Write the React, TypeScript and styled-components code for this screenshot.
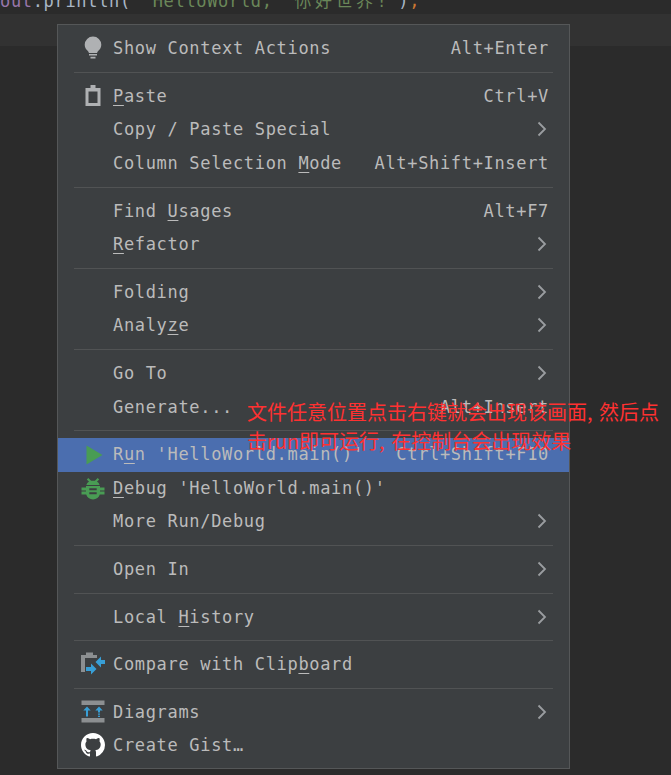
import { ReactNode } from 'react';
import styled, { createGlobalStyle } from 'styled-components';
import { BsGithub } from 'react-icons/bs';

const MONO = '"DejaVu Sans Mono", "Liberation Mono", monospace';

const GlobalStyle = createGlobalStyle`
  html, body {
    margin: 0;
    padding: 0;
    background: #2b2b2b;
  }
`;

const SEditor = styled.div`
  position: relative;
  width: 671px;
  height: 775px;
  overflow: hidden;
  background: #2b2b2b;
`;

const SCodeLine = styled.div`
  height: 14px;
  overflow: hidden;
`;

const SCodeText = styled.div`
  margin-top: -11px;
  font-family: ${MONO};
  font-size: 17px;
  letter-spacing: 0.67px;
  line-height: 22px;
  white-space: pre;
  color: #a9b7c6;
`;

const SCaretLine = styled.div`
  height: 32px;
  background: #323232;
`;

const SToken = styled.span<{ $color: string }>`
  color: ${({ $color }) => $color};
`;

const SCjkToken = styled.span`
  font-family: "Noto Sans CJK SC", sans-serif;
  letter-spacing: 3.5px;
  color: #6a8759;
`;

const SMenu = styled.div`
  position: absolute;
  left: 57px;
  top: 24px;
  box-sizing: border-box;
  width: 513px;
  height: 745px;
  padding-top: 7px;
  background: #3c3f41;
  border: 1px solid #555758;
`;

const SRow = styled.div<{ $active?: boolean }>`
  box-sizing: border-box;
  display: flex;
  align-items: center;
  height: 33.6px;
  padding: 0 20px 1.2px 22px;
  background: ${({ $active }) => ($active ? '#4b6eaf' : 'transparent')};
  font-family: ${MONO};
  font-size: 17px;
  letter-spacing: 0.67px;
  white-space: pre;
  color: #bbbbbb;
`;

const SIconCell = styled.div`
  flex: none;
  display: flex;
  align-items: center;
  justify-content: center;
  width: 25px;
  height: 24px;
  margin-right: 8px;
`;

const SLabel = styled.span`
  flex: 1;
`;

const SMnemonic = styled.span`
  text-decoration: underline;
  text-underline-offset: 3px;
  text-decoration-thickness: 1px;
`;

const SShortcut = styled.span`
  flex: none;
`;

const SChevron = styled.svg`
  flex: none;
  margin-right: 2px;
`;

const SSeparator = styled.div`
  height: 14px;
  display: flex;
  align-items: center;
  padding: 0 16px;

  &::after {
    content: '';
    flex: 1;
    height: 1px;
    background: #515354;
  }
`;

const SNote = styled.div`
  position: absolute;
  left: 247px;
  top: 397px;
  width: 420px;
  font-family: "Noto Sans CJK SC", sans-serif;
  font-size: 20px;
  line-height: 29px;
  word-spacing: 2px;
  color: #ff3131;
`;

const BulbIcon = () => (
  <svg width="24" height="24" viewBox="0 0 24 24">
    <path
      fill="#afb1b3"
      d="M12 .5a8.300 8.300 0 0 0-8.300 8.300c0 2.700 1.300 4.400 2.700 5.800.9.900 1.400 1.600 1.400 2.400h8.400c0-.8.500-1.500 1.400-2.400 1.400-1.400 2.700-3.100 2.700-5.800A8.300 8.300 0 0 0 12 .5zM8 18h8v1.600H8zM9.500 20.800h5v1.600h-5z"
    />
  </svg>
);

const ClipboardIcon = () => (
  <svg width="24" height="24" viewBox="0 0 24 24">
    <path
      fill="#afb1b3"
      fillRule="evenodd"
      d="M4.500 4H9.500V1h5v3h5v18h-15zM7.500 7.500v11.500h9V7.500z"
    />
  </svg>
);

const PlayIcon = () => (
  <svg width="24" height="24" viewBox="0 0 24 24">
    <path fill="#499c54" d="M5.500 3.500L21.500 13 5.500 22.500z" />
  </svg>
);

const BugIcon = () => (
  <svg width="24" height="24" viewBox="0 0 24 24">
    <path
      fill="#499c54"
      fillRule="evenodd"
      d="M7.300 2l2.800 2.800h3.800L16.700 2l1.500 1.400-2.300 2.400c1.400.7 2.300 1.800 2.700 3.200H5.400c.4-1.400 1.300-2.500 2.700-3.200L5.800 3.400zM5 10h14v1.400h4.500v3H19v1.200h4.500v3H18.800C18 21.500 15.400 23.500 12 23.500s-6-2-6.800-4.900H.5v-3H5v-1.200H.5v-3H5zM8.300 12.200v2h7.400v-2zM8.300 16.300v2h7.400v-2z"
    />
  </svg>
);

const CompareIcon = () => (
  <svg width="25" height="24" viewBox="0 0 25 24">
    <path fill="#8c8f91" d="M1 3h5V.500h7V3h4v3H5v14H1z" />
    <path fill="#389fd6" d="M25 8v4h-4v3.500L15.500 10 21 4.500V8zM6 15h5v-3.500l5.500 5.500-5.500 5.500V19H6z" />
  </svg>
);

const DiagramIcon = () => (
  <svg width="24" height="24" viewBox="0 0 24 24">
    <path fill="#8c8f91" d="M.5.500h23V5H.500zM.500 18h23v4.500H.500z" />
    <path
      fill="#389fd6"
      d="M6 6.500l3.700 4H7v6H5v-6H2.300zM18 6.500l3.700 4H19v2h-2v-2h-2.700zM17 13.500h2v1.300h-2zM17 15.800h2v1.200h-2z"
    />
  </svg>
);

type TMenuItem = {
  label: ReactNode;
  icon?: ReactNode;
  shortcut?: string;
  submenu?: boolean;
  active?: boolean;
};

const SECTIONS: TMenuItem[][] = [
  [{ label: 'Show Context Actions', icon: <BulbIcon />, shortcut: 'Alt+Enter' }],
  [
    {
      label: (
        <>
          <SMnemonic>P</SMnemonic>aste
        </>
      ),
      icon: <ClipboardIcon />,
      shortcut: 'Ctrl+V',
    },
    { label: 'Copy / Paste Special', submenu: true },
    {
      label: (
        <>
          Column Selection <SMnemonic>M</SMnemonic>ode
        </>
      ),
      shortcut: 'Alt+Shift+Insert',
    },
  ],
  [
    {
      label: (
        <>
          Find <SMnemonic>U</SMnemonic>sages
        </>
      ),
      shortcut: 'Alt+F7',
    },
    {
      label: (
        <>
          <SMnemonic>R</SMnemonic>efactor
        </>
      ),
      submenu: true,
    },
  ],
  [
    { label: 'Folding', submenu: true },
    {
      label: (
        <>
          Analy<SMnemonic>z</SMnemonic>e
        </>
      ),
      submenu: true,
    },
  ],
  [
    { label: 'Go To', submenu: true },
    { label: 'Generate...', shortcut: 'Alt+Insert' },
  ],
  [
    {
      label: (
        <>
          R<SMnemonic>u</SMnemonic>n 'HelloWorld.main()'
        </>
      ),
      icon: <PlayIcon />,
      shortcut: 'Ctrl+Shift+F10',
      active: true,
    },
    {
      label: (
        <>
          <SMnemonic>D</SMnemonic>ebug 'HelloWorld.main()'
        </>
      ),
      icon: <BugIcon />,
    },
    { label: 'More Run/Debug', submenu: true },
  ],
  [{ label: 'Open In', submenu: true }],
  [
    {
      label: (
        <>
          Local <SMnemonic>H</SMnemonic>istory
        </>
      ),
      submenu: true,
    },
  ],
  [
    {
      label: (
        <>
          Compare with Clip<SMnemonic>b</SMnemonic>oard
        </>
      ),
      icon: <CompareIcon />,
    },
  ],
  [
    { label: 'Diagrams', icon: <DiagramIcon />, submenu: true },
    { label: 'Create Gist…', icon: <BsGithub size={24} color="#ffffff" /> },
  ],
];

const Chevron = () => (
  <SChevron width="10" height="16" viewBox="0 0 10 16">
    <path d="M1.500 1.500L8 8l-6.500 6.500" fill="none" stroke="#9a9da0" strokeWidth="1.800" />
  </SChevron>
);

const App = () => {
  return (
    <SEditor>
      <GlobalStyle />
      <SCodeLine>
        <SCodeText>
          <SToken $color="#9876aa">out</SToken>
          .println({' '}
          <SToken $color="#6a8759">"HelloWorld,{'  '}</SToken>
          <SCjkToken>你好世界</SCjkToken>
          <SToken $color="#6a8759">!"</SToken>)
          <SToken $color="#cc7832">;</SToken>
        </SCodeText>
      </SCodeLine>
      <SCaretLine />
      <SMenu>
        {SECTIONS.map((section, index) => (
          <div key={index}>
            {index > 0 && <SSeparator />}
            {section.map((item, itemIndex) => (
              <SRow key={itemIndex} $active={item.active}>
                <SIconCell>{item.icon}</SIconCell>
                <SLabel>{item.label}</SLabel>
                {item.shortcut && <SShortcut>{item.shortcut}</SShortcut>}
                {item.submenu && <Chevron />}
              </SRow>
            ))}
          </div>
        ))}
      </SMenu>
      <SNote>
        文件任意位置点击右键就会出现该画面, 然后点击run即可运行, 在控制台会出现效果
      </SNote>
    </SEditor>
  );
};

export default App;
